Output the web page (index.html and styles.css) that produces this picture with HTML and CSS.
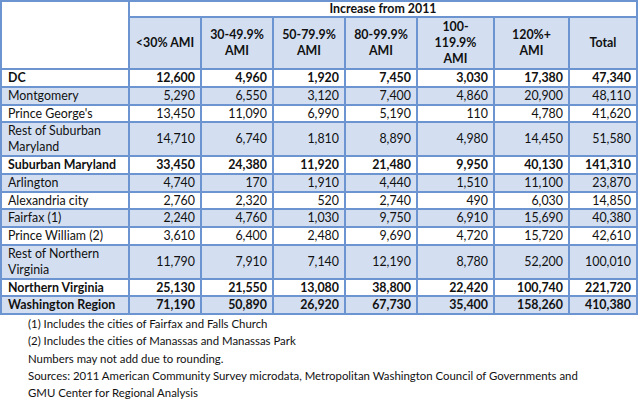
FILE: index.html
```html
<!DOCTYPE html>
<html>
<head>
<meta charset="utf-8">
<link rel="stylesheet" href="styles.css">
</head>
<body>
<table class="data">
  <colgroup>
    <col class="c-name"><col class="c-a"><col class="c-a"><col class="c-a"><col class="c-a"><col class="c-b"><col class="c-c"><col class="c-d">
  </colgroup>
  <thead>
    <tr class="h1">
      <th class="corner" rowspan="2"></th>
      <th class="span" colspan="7">Increase from 2011</th>
    </tr>
    <tr class="h2">
      <th>&lt;30% AMI</th>
      <th>30-49.9%<br>AMI</th>
      <th>50-79.9%<br>AMI</th>
      <th>80-99.9%<br>AMI</th>
      <th>100-<br>119.9%<br>AMI</th>
      <th>120%+<br>AMI</th>
      <th>Total</th>
    </tr>
  </thead>
  <tbody>
    <tr class="w b"><td>DC</td><td>12,600</td><td>4,960</td><td>1,920</td><td>7,450</td><td>3,030</td><td>17,380</td><td>47,340</td></tr>
    <tr class="s"><td>Montgomery</td><td>5,290</td><td>6,550</td><td>3,120</td><td>7,400</td><td>4,860</td><td>20,900</td><td>48,110</td></tr>
    <tr class="w"><td>Prince George's</td><td>13,450</td><td>11,090</td><td>6,990</td><td>5,190</td><td>110</td><td>4,780</td><td>41,620</td></tr>
    <tr class="s"><td>Rest of Suburban<br>Maryland</td><td>14,710</td><td>6,740</td><td>1,810</td><td>8,890</td><td>4,980</td><td>14,450</td><td>51,580</td></tr>
    <tr class="w b"><td>Suburban Maryland</td><td>33,450</td><td>24,380</td><td>11,920</td><td>21,480</td><td>9,950</td><td>40,130</td><td>141,310</td></tr>
    <tr class="s"><td>Arlington</td><td>4,740</td><td>170</td><td>1,910</td><td>4,440</td><td>1,510</td><td>11,100</td><td>23,870</td></tr>
    <tr class="w"><td>Alexandria city</td><td>2,760</td><td>2,320</td><td>520</td><td>2,740</td><td>490</td><td>6,030</td><td>14,850</td></tr>
    <tr class="s"><td>Fairfax (1)</td><td>2,240</td><td>4,760</td><td>1,030</td><td>9,750</td><td>6,910</td><td>15,690</td><td>40,380</td></tr>
    <tr class="w"><td>Prince William (2)</td><td>3,610</td><td>6,400</td><td>2,480</td><td>9,690</td><td>4,720</td><td>15,720</td><td>42,610</td></tr>
    <tr class="s"><td>Rest of Northern<br>Virginia</td><td>11,790</td><td>7,910</td><td>7,140</td><td>12,190</td><td>8,780</td><td>52,200</td><td>100,010</td></tr>
    <tr class="w b"><td>Northern Virginia</td><td>25,130</td><td>21,550</td><td>13,080</td><td>38,800</td><td>22,420</td><td>100,740</td><td>221,720</td></tr>
    <tr class="s b"><td>Washington Region</td><td>71,190</td><td>50,890</td><td>26,920</td><td>67,730</td><td>35,400</td><td>158,260</td><td>410,380</td></tr>
  </tbody>
</table>
<div class="notes">
  <p>(1) Includes the cities of Fairfax and Falls Church</p>
  <p>(2) Includes the cities of Manassas and Manassas Park</p>
  <p>Numbers may not add due to rounding.</p>
  <p>Sources: 2011 American Community Survey microdata, Metropolitan Washington Council of Governments and</p>
  <p>GMU Center for Regional Analysis</p>
</div>
</body>
</html>
```

FILE: styles.css
```css
html, body {
  margin: 0;
  padding: 0;
  background: #ffffff;
}
body {
  font-family: Lato, "Open Sans", "Liberation Sans", sans-serif;
  font-size: 12.4px;
  color: #111111;
}
.data {
  border-collapse: collapse;
  table-layout: fixed;
  width: 636px;
}
.c-name { width: 128px; }
.c-a { width: 72px; }
.c-b { width: 77px; }
.c-c { width: 75px; }
.c-d { width: 68px; }
.data th, .data td {
  border: 2px solid #6b94d0;
  padding: 0 5px;
  line-height: 15.8px;
  vertical-align: middle;
  overflow: hidden;
  white-space: nowrap;
}
.data th {
  font-weight: bold;
  text-align: center;
}
.h1 th { height: 14px; line-height: 14px; background: #ffffff; }
.h1 .span { text-align: center; }
.h2 th { height: 50px; background: #d3dff1; }
.corner { background: #ffffff; }
.data td { text-align: right; }
.data td:first-child { text-align: left; padding-left: 6px; }
.w td { background: #ffffff; }
.s td { background: #d3dff1; }
.b td { font-weight: bold; }
.notes {
  padding-left: 28px;
  font-size: 11.4px;
}
.notes p {
  margin: 0;
  line-height: 17.3px;
  white-space: nowrap;
}
```
